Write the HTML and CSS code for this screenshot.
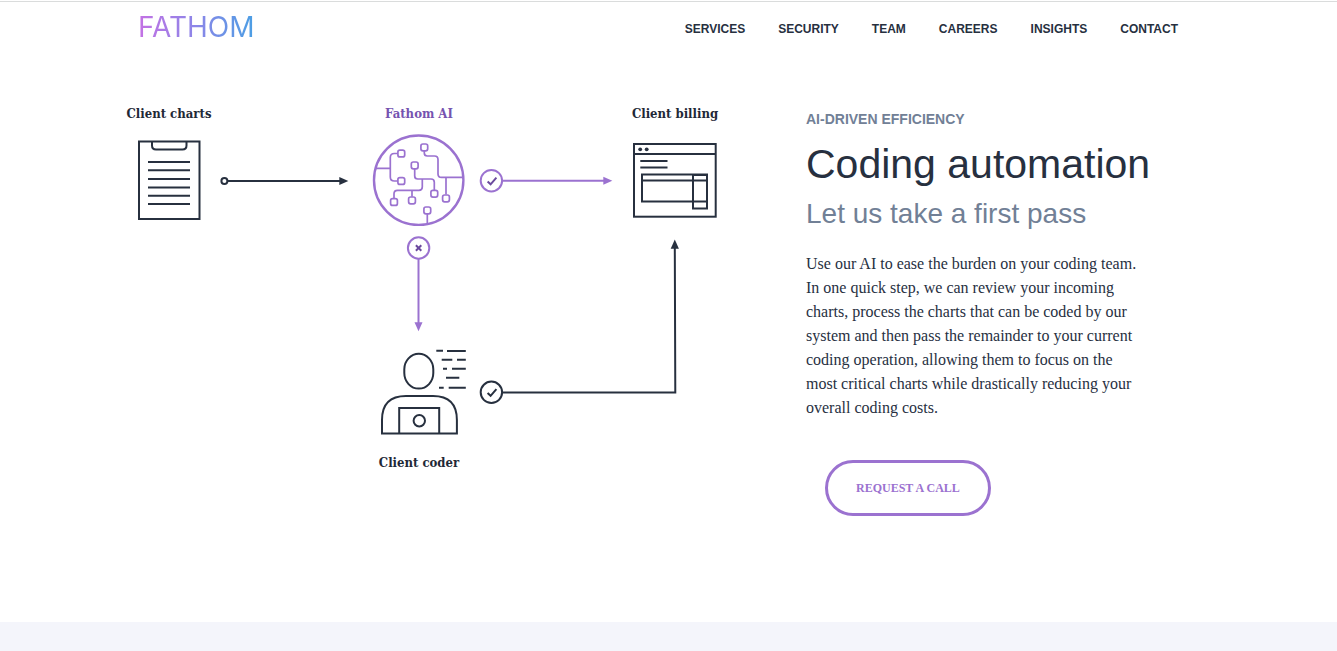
FILE: index.html
```html
<!DOCTYPE html>
<html lang="en">
<head>
<meta charset="utf-8">
<meta name="viewport" content="width=device-width, initial-scale=1">
<title>Fathom – Coding automation</title>
<link rel="stylesheet" href="styles.css">
</head>
<body>
<header class="site-header">
  <div class="header-inner">
    <a class="logo" href="#">FATHOM</a>
    <nav class="nav">
      <a href="#">SERVICES</a>
      <a href="#">SECURITY</a>
      <a href="#">TEAM</a>
      <a href="#">CAREERS</a>
      <a href="#">INSIGHTS</a>
      <a href="#">CONTACT</a>
    </nav>
  </div>
</header>
<main class="hero">
  <svg class="diagram" viewBox="120 95 620 390" role="img" aria-label="Coding automation flow">
    <g class="label">
      <text x="169" y="118">Client charts</text>
      <text x="419" y="118" class="label-ai">Fathom AI</text>
      <text x="675" y="118">Client billing</text>
      <text x="419" y="467">Client coder</text>
    </g>

    <!-- clipboard -->
    <g class="ink">
      <rect x="139" y="141.5" width="60.5" height="77.5"/>
      <path d="M152 141.5V145.500Q152 149.500 156 149.500H182.500Q186.500 149.500 186.500 145.500V141.500"/>
      <path d="M148 162H190M148 170.300H190M148 179H190M148 187.600H190M148 195.700H190M148 204H190"/>
      <circle cx="224.400" cy="181" r="3"/>
      <path d="M227.500 181H340"/>
    </g>
    <path class="ink-fill" d="M339.300 177L348.300 181L339.300 185Z"/>

    <!-- AI circuit -->
    <g class="violet">
      <circle cx="418.700" cy="180.200" r="44.700" stroke-width="2.400"/>
      <g stroke-width="1.700">
        <path d="M375.500 168.300H390.300M397.800 153.500H394.300Q390.300 153.500 390.300 157.500V177Q390.300 181 394.300 181H397.800"/>
        <path d="M424.300 151V153Q424.300 156 427.300 156H434.500Q438 156 438 159.500V174Q438 177.400 441.500 177.400H462.500M446 177.400V194.500"/>
        <path d="M414.700 169V176Q414.700 179 417.700 179H431Q434.300 179 434.300 182.300V190"/>
        <path d="M422.300 179V187Q422.300 190.300 419 190.300H397.500Q394 190.300 394 193.800V198.300M412 190.300V196.700"/>
        <path d="M427.300 214V223.500"/>
        <rect x="397.900" y="150.100" width="6.800" height="6.800" rx="2"/>
        <rect x="397.900" y="177.600" width="6.800" height="6.800" rx="2"/>
        <rect x="420.900" y="144" width="6.800" height="6.800" rx="2"/>
        <rect x="411.300" y="162" width="6.800" height="6.800" rx="2"/>
        <rect x="430.900" y="190.300" width="6.800" height="6.800" rx="2"/>
        <rect x="442.600" y="195" width="6.800" height="6.800" rx="2"/>
        <rect x="390.600" y="198.600" width="6.800" height="6.800" rx="2"/>
        <rect x="408.600" y="197" width="6.800" height="6.800" rx="2"/>
        <rect x="423.900" y="207" width="6.800" height="6.800" rx="2"/>
      </g>
      <circle cx="491.400" cy="180.700" r="10.700"/>
      <path d="M502.500 180.700H604"/>
      <circle cx="418.600" cy="248" r="10.700"/>
      <path d="M418.500 259V323"/>
    </g>
    <path class="violet-fill" d="M603.300 176.700L612.300 180.700L603.300 184.700Z"/>
    <path class="violet-fill" d="M414.500 322.300H422.500L418.500 331.300Z"/>
    <path class="mark" d="M487.600 181.500L490.600 184.300L496.400 177.700M415.900 245.300L421.300 250.700M421.300 245.300L415.900 250.700"/>

    <!-- billing window -->
    <g class="ink">
      <rect x="634" y="144" width="81.700" height="72.700"/>
      <path d="M634 154H715.500M640.300 161H667.500M640.300 167.400H667.500M642 180.600H707"/>
      <rect x="642" y="174.500" width="65" height="27"/>
      <rect x="693" y="175" width="14" height="33.500"/>
    </g>
    <circle class="ink-fill" cx="640.200" cy="149.300" r="1.900"/>
    <circle class="ink-fill" cx="646.700" cy="149.300" r="1.900"/>

    <!-- coder at laptop -->
    <g class="ink">
      <rect x="404.300" y="353.800" width="29" height="34.800" rx="14.500" ry="15.500"/>
      <path d="M382 433.600V420Q382 396 406 396H433Q456.900 396 456.900 420V433.600Z"/>
      <path d="M399.200 433.500V408H439.200V433.500"/>
      <circle cx="419.300" cy="420.700" r="5.700"/>
      <path d="M436.300 350.800H443M447 351H465.800M441.700 359.700H452.300M457 359.700H465.800M443 368.700H447M452 368.700H465.800M446 377.800H459.300M439 387.700H443.700M448.700 387.700H465.800"/>
      <circle cx="491.400" cy="392.300" r="10.700"/>
      <path d="M487.600 393L490.600 395.800L496.400 389.200"/>
      <path d="M502.500 392.400H675.300L674.800 248"/>
    </g>
    <path class="ink-fill" d="M670.700 248.700L674.800 239.500L678.900 248.700Z"/>
  </svg>
  <section class="copy">
    <p class="eyebrow">AI-DRIVEN EFFICIENCY</p>
    <h1 class="title">Coding automation</h1>
    <h2 class="subtitle">Let us take a first pass</h2>
    <p class="body-text">Use our AI to ease the burden on your coding team. In one quick step, we can review your incoming charts, process the charts that can be coded by our system and then pass the remainder to your current coding operation, allowing them to focus on the most critical charts while drastically reducing your overall coding costs.</p>
    <button class="cta" type="button">REQUEST A CALL</button>
  </section>
</main>
<div class="band"></div>
</body>
</html>
```
FILE: styles.css
```css
* {
  box-sizing: border-box;
}

body {
  margin: 0;
  min-height: 100vh;
  display: flex;
  flex-direction: column;
  padding-top: 1px;
  background: #fff;
  color: #27303f;
  font-family: "Liberation Sans", Arial, sans-serif;
}

.site-header {
  border-top: 1px solid #dadcdc;
}

.header-inner {
  max-width: 1097px;
  margin: 0 auto;
  padding: 7px 39px 9px 18px;
  display: flex;
  justify-content: space-between;
  align-items: center;
}

.logo {
  font: 400 28px/36px Inter, sans-serif;
  text-decoration: none;
  color: transparent;
  background: linear-gradient(90deg, #c471e4, #8b86e8 50%, #4a9fe4);
  background-clip: text;
  -webkit-background-clip: text;
}

.nav {
  display: flex;
  gap: 33px;
  padding-top: 4px;
}

.nav a {
  color: #27303f;
  font-size: 12px;
  font-weight: 700;
  line-height: 16px;
  text-decoration: none;
}

.hero {
  width: 100%;
  max-width: 1097px;
  margin: 0 auto;
  padding: 41px 0 106px;
  display: flex;
  align-items: flex-start;
  gap: 66px;
}

.diagram {
  flex: 0 1 620px;
  min-width: 0;
}

.label {
  fill: #1f2937;
  font: 700 13px "DejaVu Serif Condensed", "DejaVu Serif", serif;
  text-anchor: middle;
}

.label-ai {
  fill: #7553b0;
}

.ink {
  fill: none;
  stroke: #27303f;
  stroke-width: 2;
}

.ink-fill {
  fill: #27303f;
}

.violet {
  fill: none;
  stroke: #9b72d0;
  stroke-width: 2;
}

.violet-fill {
  fill: #9b72d0;
}

.mark {
  fill: none;
  stroke: #6b4a9e;
  stroke-width: 2;
}

.copy {
  flex: 1 1 0;
  padding-top: 16px;
}

.eyebrow {
  margin: 0;
  color: #718096;
  font-size: 14px;
  font-weight: 700;
  line-height: 16px;
}

.title {
  margin: 13px 0 0;
  font-size: 41px;
  font-weight: 400;
  line-height: 48px;
}

.subtitle {
  margin: 10px 0 0;
  color: #718096;
  font-size: 28px;
  font-weight: 400;
  line-height: 32px;
}

.body-text {
  max-width: 340px;
  margin: 22px 0 0;
  font-family: "Liberation Serif", "Times New Roman", serif;
  font-size: 16px;
  line-height: 24px;
}

.cta {
  display: block;
  margin: 40px 0 0 19px;
  padding: 17px 28px;
  border: 3px solid #9b72d0;
  border-radius: 28px;
  background: #fff;
  color: #9b72d0;
  font: 700 12px/16px "Liberation Serif", "Times New Roman", serif;
}

.band {
  flex: 1 0 29px;
  background: #f4f5fb;
}
```
